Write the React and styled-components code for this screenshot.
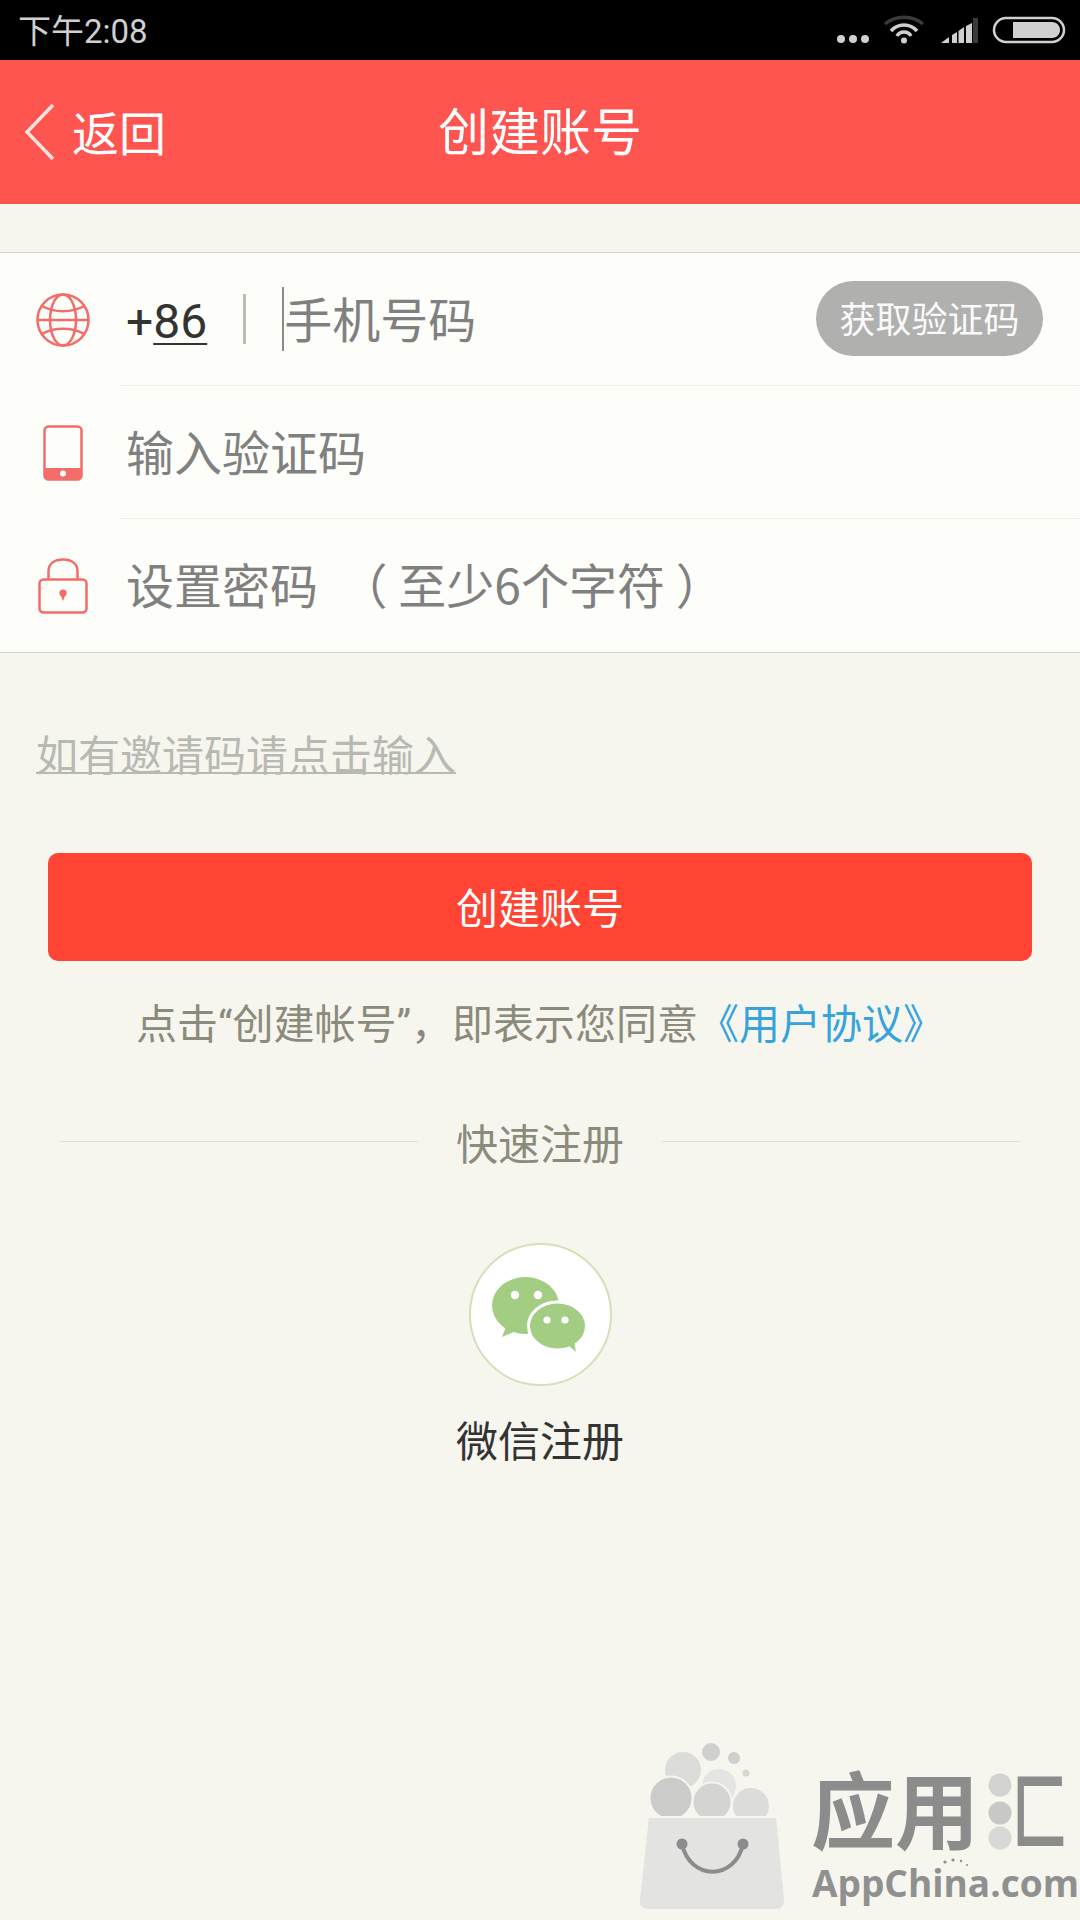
import React from "react";
import styled, { createGlobalStyle } from "styled-components";

const GlobalStyle = createGlobalStyle`
html, body {
  margin: 0;
  padding: 0;
  background: #f6f6ee;
}
* {
  box-sizing: border-box;
}
`;

const Page = styled.div`
position: relative;
display: flex;
flex-direction: column;
width: 1080px;
height: 1920px;
overflow: hidden;
background: #f6f6ee;
font-family: "Noto Sans CJK SC", "Noto Sans", sans-serif;
font-weight: 400;
text-spacing-trim: space-all;
`;

const StatusBar = styled.div`
display: flex;
justify-content: space-between;
align-items: center;
height: 60px;
padding: 0 14px 0 18px;
background: #000;
color: #cfcfcf;
font-size: 33px;
font-family: "Roboto", "Noto Sans CJK SC", sans-serif;
`;

const StatusTime = styled.span`
margin-top: -2px;
`;

const StatusIcons = styled.div`
display: flex;
align-items: center;
gap: 13px;
`;

const Header = styled.div`
position: relative;
display: flex;
align-items: center;
justify-content: center;
height: 144px;
background: #ff5551;
color: #fff;
`;

const BackButton = styled.div`
position: absolute;
left: 24px;
top: 0;
bottom: 0;
display: flex;
align-items: center;
gap: 16px;
font-size: 47px;
`;

const BackLabel = styled.span`
margin-bottom: 4px;
`;

const Title = styled.div`
font-size: 51px;
margin-bottom: 6px;
`;

const Form = styled.div`
margin-top: 48px;
background: #fdfdf9;
border-top: 1px solid #d6d6d0;
border-bottom: 1px solid #d6d6d0;
`;

const Row = styled.div`
display: flex;
height: 133px;
padding-left: 36px;
`;

const IconSlot = styled.div`
display: flex;
align-items: center;
justify-content: center;
flex: 0 0 54px;
`;

const RowBody = styled.div`
flex: 1;
display: flex;
align-items: center;
margin-left: 30px;
padding-left: 6px;
padding-right: 37px;
border-bottom: ${(p) => (p.$last ? "none" : "1px solid #eeeee8")};
`;

const Code = styled.span`
margin-top: 4px;
font-size: 48px;
color: #333;
font-family: "Roboto", sans-serif;
`;

const CodeDigits = styled.span`
text-decoration: underline;
text-decoration-thickness: 2px;
text-underline-offset: 5px;
`;

const Separator = styled.span`
width: 3px;
height: 50px;
margin-left: 36px;
background: #bcbcb4;
`;

const Caret = styled.span`
width: 2px;
height: 64px;
margin-left: 36px;
background: #8a8a86;
`;

const Hint = styled.span`
flex: ${(p) => (p.$grow ? 1 : "none")};
margin-bottom: 5px;
font-size: 48px;
color: #808080;
white-space: pre;
`;

const CodeButton = styled.button`
width: 227px;
height: 75px;
margin-bottom: 2px;
border: none;
border-radius: 38px;
padding: 0 0 3px;
background: #b0b0ae;
color: #fafafa;
font-family: inherit;
font-weight: 400;
font-size: 36px;
`;

const InviteLink = styled.a`
margin: 70px 0 0 36px;
font-size: 42px;
line-height: 60px;
color: #b9b9b4;
text-decoration: underline;
text-decoration-thickness: 2px;
`;

const SubmitButton = styled.button`
margin: 70px 48px 0;
height: 108px;
border: none;
border-radius: 10px;
padding: 0 0 4px;
background: #ff4433;
color: #fff;
font-family: inherit;
font-weight: 400;
font-size: 42px;
`;

const Agreement = styled.div`
margin-top: 34px;
text-align: center;
font-family: "Roboto", "Noto Sans CJK SC", sans-serif;
font-size: 41px;
line-height: 60px;
color: #8b8b7c;
`;

const AgreementLink = styled.span`
color: #36a3dc;
`;

const DividerRow = styled.div`
display: flex;
align-items: center;
gap: 38px;
margin: 57px 60px 0;
font-size: 42px;
line-height: 60px;
color: #8b8b7c;
`;

const DividerLine = styled.span`
flex: 1;
height: 1px;
margin-top: -2px;
background: #dededa;
`;

const Social = styled.div`
display: flex;
flex-direction: column;
align-items: center;
margin-top: 71px;
`;

const WechatCircle = styled.div`
display: flex;
align-items: center;
justify-content: center;
width: 143px;
height: 143px;
border-radius: 50%;
border: 2px solid #d6dfb8;
background: #fff;
`;

const SocialLabel = styled.div`
margin-top: 23px;
font-size: 42px;
line-height: 60px;
color: #333;
`;

const Watermark = styled.div`
position: absolute;
right: 0;
bottom: 0;
width: 460px;
height: 200px;
`;

const WatermarkBrand = styled.div`
position: absolute;
left: 191px;
top: 37px;
font-size: 84px;
line-height: 100px;
font-weight: 700;
color: #8c8c8c;
`;

const WatermarkStroke = styled.div`
position: absolute;
left: 392px;
top: 37px;
font-size: 84px;
line-height: 100px;
font-weight: 700;
color: #8c8c8c;
transform: scaleX(0.66);
transform-origin: left center;
`;

const WatermarkDomain = styled.div`
position: absolute;
left: 192px;
top: 135px;
font-family: "Open Sans", sans-serif;
font-weight: 700;
font-size: 37px;
line-height: 56px;
color: #909090;
`;

const WatermarkArt = styled.svg`
position: absolute;
left: 0;
top: 0;
`;

const rowIcon = "#f46c69";

function GlobeIcon() {
  return (
    <svg width="54" height="54" viewBox="0 0 54 54" fill="none" stroke={rowIcon} strokeWidth="2.5">
      <circle cx="27" cy="27" r="25.5" />
      <ellipse cx="27" cy="27" rx="13" ry="25.5" />
      <path d="M1.5 27H52.5M6 13C18 20 36 20 48 13M6 41C18 34 36 34 48 41" />
    </svg>
  );
}

function PhoneIcon() {
  return (
    <svg width="40" height="56" viewBox="0 0 40 56" fill="none">
      <rect x="1.5" y="1.5" width="37" height="53" rx="4" stroke={rowIcon} strokeWidth="2.5" />
      <path d="M1.5 43H38.5V51C38.5 53 37 54.5 35 54.5H5C3 54.5 1.5 53 1.5 51Z" fill={rowIcon} />
      <circle cx="20" cy="48.5" r="3" fill="#fdfdf9" />
    </svg>
  );
}

function LockIcon() {
  return (
    <svg width="50" height="56" viewBox="0 0 50 56" fill="none">
      <rect x="1.5" y="21.5" width="47" height="33" rx="4" stroke={rowIcon} strokeWidth="2.5" />
      <path d="M10.5 21V13C10.5 6 16 1.5 25 1.5C34 1.5 39.5 6 39.5 13V21" stroke={rowIcon} strokeWidth="2.5" />
      <circle cx="25" cy="35" r="3.6" fill={rowIcon} />
      <path d="M22.4 36.5H27.6L25 43Z" fill={rowIcon} />
    </svg>
  );
}

function WechatIcon() {
  return (
    <svg width="96" height="80" viewBox="0 0 96 80">
      <ellipse cx="33.5" cy="30.5" rx="33.5" ry="28.5" fill="#a3cd83" />
      <path d="M14 52L10 62L24 56Z" fill="#a3cd83" />
      <ellipse cx="65.5" cy="51" rx="29" ry="24" fill="#a3cd83" stroke="#fff" strokeWidth="3" />
      <path d="M76 70L84 77L82 66Z" fill="#a3cd83" />
      <circle cx="23" cy="20" r="4.2" fill="#fff" />
      <circle cx="46" cy="20" r="4.2" fill="#fff" />
      <circle cx="55" cy="45" r="3.6" fill="#fff" />
      <circle cx="73" cy="45" r="3.6" fill="#fff" />
    </svg>
  );
}

function BagArt() {
  return (
    <WatermarkArt width="460" height="200" viewBox="0 0 460 200">
      <circle cx="63" cy="50" r="18" fill="#dcdcda" />
      <circle cx="91" cy="32" r="9" fill="#cfcfcd" />
      <circle cx="114" cy="38" r="6" fill="#cfcfcd" />
      <circle cx="126" cy="53" r="3.5" fill="#d6d6d4" />
      <circle cx="99" cy="66" r="17" fill="#e4e4e2" />
      <circle cx="51" cy="78" r="21.5" fill="#cbcbc9" stroke="#f6f6ee" strokeWidth="2" />
      <circle cx="92" cy="82" r="19.5" fill="#d4d4d2" stroke="#f6f6ee" strokeWidth="2" />
      <circle cx="131" cy="86" r="18" fill="#dcdcda" />
      <path d="M28 97H157L165 180C165 186 162 190 156 190H28C22 190 18 186 19 180Z" fill="#e3e3e1" stroke="#f6f6ee" strokeWidth="2" />
      <path d="M62 124C70 161 115 161 123 124" fill="none" stroke="#8c8c8c" strokeWidth="4" />
      <circle cx="62" cy="124" r="5.5" fill="#8c8c8c" />
      <circle cx="123" cy="124" r="5.5" fill="#8c8c8c" />
      <circle cx="380" cy="65" r="11.5" fill="#d2d2d0" />
      <circle cx="380" cy="93" r="11.5" fill="#c8c8c6" />
      <circle cx="380" cy="118" r="11.5" fill="#d8d8d6" />
      <g fill="#8c8c8c">
        <circle cx="325" cy="142" r="1.6" />
        <circle cx="333" cy="140" r="1.6" />
        <circle cx="341" cy="141" r="1.2" />
        <circle cx="347" cy="145" r="1" />
      </g>
    </WatermarkArt>
  );
}

function App() {
  return (
    <Page>
      <GlobalStyle />
      <StatusBar>
        <StatusTime>下午2:08</StatusTime>
        <StatusIcons>
          <svg width="32" height="60" viewBox="0 0 32 60" fill="#d0d0d0">
            <circle cx="4" cy="39" r="4" />
            <circle cx="16" cy="39" r="4" />
            <circle cx="28" cy="39" r="4" />
          </svg>
          <svg width="44" height="60" viewBox="0 0 44 60" fill="none" stroke="#d0d0d0" strokeWidth="3.5">
            <path d="M3 24C14 15 30 15 41 24" stroke="#3a3a3a" />
            <path d="M9 31C16 23 28 23 35 31" />
            <path d="M15 36C18 30.7 26 30.7 29 36" />
            <circle cx="22" cy="40.5" r="3" fill="#d0d0d0" stroke="none" />
          </svg>
          <svg width="40" height="60" viewBox="0 0 40 60">
            <path d="M2 43L10 37V43Z M13 35L18 32V43H13Z M19.5 31L25 27V43H19.5Z M27 26L33 23V43H27Z" fill="#d0d0d0" />
            <path d="M34 18L39 18V43H34Z" fill="#3a3a3a" />
          </svg>
          <svg width="74" height="60" viewBox="0 0 74 60" fill="none">
            <rect x="2" y="18" width="70" height="24" rx="12" stroke="#d0d0d0" strokeWidth="2.5" />
            <path d="M21 22H60C65 22 68 26 68 30C68 34 65 38 60 38H21Z" fill="#d0d0d0" />
          </svg>
        </StatusIcons>
      </StatusBar>

      <Header>
        <BackButton>
          <svg width="32" height="58" viewBox="0 0 32 58" fill="none" stroke="#ffe3df" strokeWidth="3.5">
            <path d="M29 2L3 29L29 56" />
          </svg>
          <BackLabel>返回</BackLabel>
        </BackButton>
        <Title>创建账号</Title>
      </Header>

      <Form>
        <Row>
          <IconSlot><GlobeIcon /></IconSlot>
          <RowBody>
            <Code>+<CodeDigits>86</CodeDigits></Code>
            <Separator />
            <Caret />
            <Hint $grow>手机号码</Hint>
            <CodeButton>获取验证码</CodeButton>
          </RowBody>
        </Row>
        <Row>
          <IconSlot><PhoneIcon /></IconSlot>
          <RowBody>
            <Hint>输入验证码</Hint>
          </RowBody>
        </Row>
        <Row>
          <IconSlot><LockIcon /></IconSlot>
          <RowBody $last>
            <Hint>设置密码  （ 至少6个字符 ）</Hint>
          </RowBody>
        </Row>
      </Form>

      <InviteLink>如有邀请码请点击输入</InviteLink>
      <SubmitButton>创建账号</SubmitButton>
      <Agreement>点击“创建帐号”，即表示您同意<AgreementLink>《用户协议》</AgreementLink></Agreement>

      <DividerRow>
        <DividerLine />
        快速注册
        <DividerLine />
      </DividerRow>

      <Social>
        <WechatCircle><WechatIcon /></WechatCircle>
        <SocialLabel>微信注册</SocialLabel>
      </Social>

      <Watermark>
        <BagArt />
        <WatermarkBrand>应用</WatermarkBrand>
        <WatermarkStroke>匚</WatermarkStroke>
        <WatermarkDomain>AppChina.com</WatermarkDomain>
      </Watermark>
    </Page>
  );
}

export default App;
